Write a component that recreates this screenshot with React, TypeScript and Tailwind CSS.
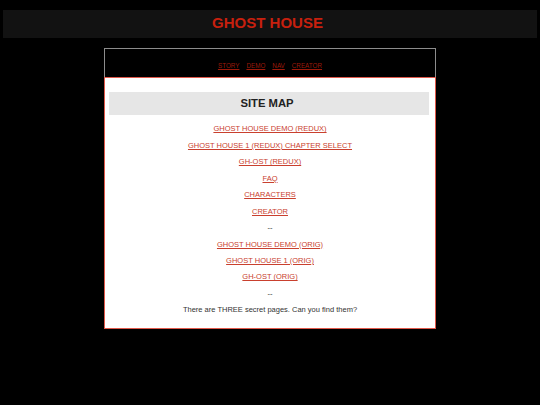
import React from 'react';

const NAV = ['STORY', 'DEMO', 'NAV', 'CREATOR'];

const LINES: { text: string; link: boolean }[] = [
  { text: 'GHOST HOUSE DEMO (REDUX)', link: true },
  { text: 'GHOST HOUSE 1 (REDUX) CHAPTER SELECT', link: true },
  { text: 'GH-OST (REDUX)', link: true },
  { text: 'FAQ', link: true },
  { text: 'CHARACTERS', link: true },
  { text: 'CREATOR', link: true },
  { text: '--', link: false },
  { text: 'GHOST HOUSE DEMO (ORIG)', link: true },
  { text: 'GHOST HOUSE 1 (ORIG)', link: true },
  { text: 'GH-OST (ORIG)', link: true },
  { text: '--', link: false },
  { text: 'There are THREE secret pages. Can you find them?', link: false },
];

const App: React.FC = () => {
  return (
    <div className="min-h-screen w-full bg-black pt-[10px] font-['Liberation_Sans',Arial,sans-serif]">
      <header className="mx-[3px] h-[28px] bg-[#121212] flex items-center justify-center pb-[3px] pr-[5px]">
        <h1 className="text-[15px] font-bold text-[#c8200e] leading-none">GHOST HOUSE</h1>
      </header>

      <div className="mx-auto mt-[10px] w-[332px]">
        <nav className="h-[29px] border border-b-0 border-[#8c8c8c] flex items-end justify-center gap-[7px] pb-[8px]">
          {NAV.map(item => (
            <a key={item} href="#" className="text-[6.3px] leading-none text-[#9c1a0a] underline">
              {item}
            </a>
          ))}
        </nav>

        <main className="border border-[#e0584a] bg-white pt-[14px] pb-[10px]">
          <div className="ml-[4px] mr-[6px] h-[23px] bg-[#e6e6e6] flex items-center justify-center pr-[4px]">
            <h2 className="text-[11.25px] font-bold text-[#222] leading-none">SITE MAP</h2>
          </div>
          <div className="mt-[6px] flex flex-col items-center">
            {LINES.map((line, i) => (
              <div key={i} className="h-[16.45px] flex items-center justify-center text-[7.5px] leading-none">
                {line.link ? (
                  <a href="#" className="text-[#c9402e] underline">{line.text}</a>
                ) : (
                  <span className="text-[#333]">{line.text}</span>
                )}
              </div>
            ))}
          </div>
        </main>
      </div>
    </div>
  );
};

export default App;
